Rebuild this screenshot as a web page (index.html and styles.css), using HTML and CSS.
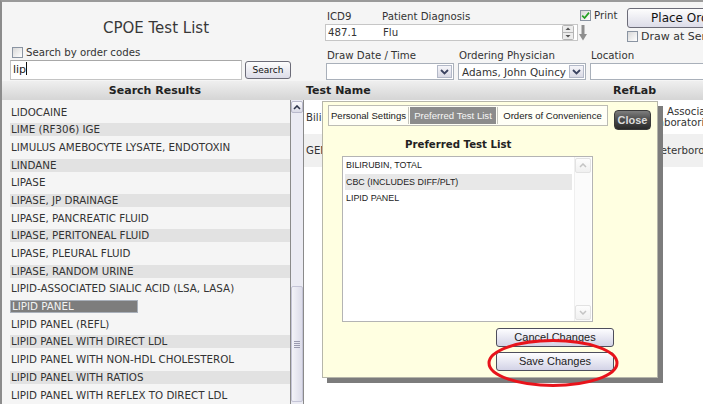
FILE: index.html
```html
<!DOCTYPE html>
<html lang="en">

<head>
    <meta charset="UTF-8">
    <meta name="viewport" content="width=device-width, initial-scale=1.0">
    <title>CPOE Test List</title>
    <link rel="stylesheet" href="styles.css">
</head>

<body>
    <div class="app">
        <!-- top: search + order header -->
        <div class="top">
            <div class="search-panel">
                <div class="title">CPOE Test List</div>
                <div class="code-row"><span class="cb"></span>Search by order codes</div>
                <div class="search-row">
                    <div class="search-box">lip<span class="caret"></span></div>
                    <div class="btn search-btn">Search</div>
                </div>
            </div>

            <div class="order-panel">
                <div class="row-a">
                    <div class="diag">
                        <div class="diag-labels">
                            <span class="lbl-icd">ICD9</span>
                            <span class="lbl-diag">Patient Diagnosis</span>
                            <span class="print"><span class="cb"><svg width="9" height="9" viewBox="0 0 9 9"><path d="M1.2 4.6 L3.6 7 L8 1.6" stroke="#23a023" stroke-width="1.7" fill="none"/></svg></span>Print</span>
                        </div>
                        <div class="diag-field-row">
                            <div class="diag-field">
                                <span class="icd-val">487.1</span>
                                <span class="dx-val">Flu</span>
                                <svg class="spin" width="12" height="15" viewBox="0 0 12 15">
                                    <rect x="0.5" y="0.5" width="11" height="14" rx="1" fill="#ececec" stroke="#b4b4b4"/>
                                    <line x1="1" y1="7.5" x2="11" y2="7.5" stroke="#b4b4b4"/>
                                    <path d="M3.5 5 L6 2.5 L8.5 5 Z" fill="#555"/>
                                    <path d="M3.5 10 L6 12.5 L8.5 10 Z" fill="#555"/>
                                </svg>
                            </div>
                            <svg class="dn-arrow" width="8" height="16" viewBox="0 0 8 16">
                                <rect x="2.5" y="0" width="3" height="10" fill="#8e8e8e"/>
                                <path d="M0 9 L8 9 L4 15.5 Z" fill="#8e8e8e"/>
                            </svg>
                        </div>
                    </div>
                    <div class="place">
                        <div class="btn place-btn">Place Order</div>
                        <div class="draw-row"><span class="cb"></span>Draw at Service Center</div>
                    </div>
                </div>

                <div class="row-b">
                    <div class="fld fld-date">
                        <div class="fld-lbl">Draw Date / Time</div>
                        <div class="sel"><span class="sel-txt"></span><span class="sel-btn"><svg width="9" height="6" viewBox="0 0 9 6"><polyline points="1,1 4.5,4.5 8,1" stroke="#3b4360" stroke-width="1.8" fill="none"/></svg></span></div>
                    </div>
                    <div class="fld fld-doc">
                        <div class="fld-lbl">Ordering Physician</div>
                        <div class="sel"><span class="sel-txt">Adams, John Quincy</span><span class="sel-btn"><svg width="9" height="6" viewBox="0 0 9 6"><polyline points="1,1 4.5,4.5 8,1" stroke="#3b4360" stroke-width="1.8" fill="none"/></svg></span></div>
                    </div>
                    <div class="fld fld-loc">
                        <div class="fld-lbl">Location</div>
                        <div class="sel loc-box"></div>
                    </div>
                </div>
            </div>
        </div>

        <!-- column headings -->
        <div class="headbar">
            <div class="h-results">Search Results</div>
            <div class="h-name">Test Name</div>
            <div class="h-lab">RefLab</div>
        </div>

        <div class="main">
            <div class="results">
                <ul class="result-list">
                    <li>LIDOCAINE</li>
                    <li class="alt">LIME (RF306) IGE</li>
                    <li>LIMULUS AMEBOCYTE LYSATE, ENDOTOXIN</li>
                    <li class="alt">LINDANE</li>
                    <li>LIPASE</li>
                    <li class="alt">LIPASE, JP DRAINAGE</li>
                    <li>LIPASE, PANCREATIC FLUID</li>
                    <li class="alt">LIPASE, PERITONEAL FLUID</li>
                    <li>LIPASE, PLEURAL FLUID</li>
                    <li class="alt">LIPASE, RANDOM URINE</li>
                    <li>LIPID-ASSOCIATED SIALIC ACID (LSA, LASA)</li>
                    <li class="sel">LIPID PANEL</li>
                    <li>LIPID PANEL (REFL)</li>
                    <li class="alt">LIPID PANEL WITH DIRECT LDL</li>
                    <li>LIPID PANEL WITH NON-HDL CHOLESTEROL</li>
                    <li class="alt">LIPID PANEL WITH RATIOS</li>
                    <li>LIPID PANEL WITH REFLEX TO DIRECT LDL</li>
                </ul>
            </div>
            <div class="vscroll">
                <div class="vs-up"><svg width="8" height="5" viewBox="0 0 8 5"><polyline points="1,4 4,1 7,4" stroke="#2c3348" stroke-width="1.6" fill="none"/></svg></div>
                <div class="vs-track"></div>
                <div class="vs-thumb"><span class="grip"></span></div>
            </div>
            <div class="tests">
                <div class="trow">
                    <div class="t-name">Bilirubin, Total</div>
                    <div class="t-lab"><div class="lab-1">Associated</div><div>Laboratories</div></div>
                </div>
                <div class="trow alt">
                    <div class="t-name">GENERAL HEALTH PANEL</div>
                    <div class="t-lab"><div class="lab-2">Peterborough</div></div>
                </div>
            </div>
        </div>

        <!-- preferences popup -->
        <div class="dlg">
            <div class="dlg-top">
                <div class="tabs">
                    <span class="tab tab-1">Personal Settings</span>
                    <span class="tab tab-2 on">Preferred Test List</span>
                    <span class="tab tab-3">Orders of Convenience</span>
                </div>
                <div class="close">Close</div>
            </div>
            <div class="dlg-title">Preferred Test List</div>
            <div class="pick">
                <ul class="pick-list">
                    <li>BILIRUBIN, TOTAL</li>
                    <li class="hl">CBC (INCLUDES DIFF/PLT)</li>
                    <li>LIPID PANEL</li>
                </ul>
                <div class="pick-sb">
                    <span class="pk-btn"><svg width="8" height="5" viewBox="0 0 8 5"><polyline points="1,4 4,1 7,4" stroke="#c4c4c4" stroke-width="1.5" fill="none"/></svg></span>
                    <span class="pk-btn"><svg width="8" height="5" viewBox="0 0 8 5"><polyline points="1,1 4,4 7,1" stroke="#c4c4c4" stroke-width="1.5" fill="none"/></svg></span>
                </div>
            </div>
            <div class="dlg-btns">
                <div class="dbtn">Cancel Changes</div>
                <div class="dbtn">Save Changes</div>
            </div>
        </div>

        <svg class="mark" width="134" height="50" viewBox="0 0 134 50">
            <ellipse cx="67" cy="25" rx="64" ry="22.5" fill="none" stroke="#e8131b" stroke-width="3"/>
        </svg>
    </div>
</body>

</html>
```

FILE: styles.css
```css
html,
body {
    margin: 0;
}

body {
    font-family: "DejaVu Sans", Verdana, sans-serif;
    font-size: 10.2px;
    color: #333;
    background: #fff;
    overflow: hidden;
}

.app {
    position: relative;
    width: 703px;
    height: 404px;
    box-sizing: border-box;
    border-top: 2px solid #9a9a9a;
    border-left: 2px solid #8c8c8c;
    overflow: hidden;
    background: #fff;
}

/* shared bits */
.cb {
    display: inline-flex;
    align-items: center;
    justify-content: center;
    width: 11px;
    height: 11px;
    box-sizing: border-box;
    border: 1px solid #8a94a2;
    background: linear-gradient(135deg, #d8d8d8, #fff);
    flex: none;
}

.btn {
    box-sizing: border-box;
    border: 1px solid #6c6c78;
    border-radius: 3px;
    background: linear-gradient(#fdfdfd, #dcdce8);
    color: #111;
    text-align: center;
}

/* top area */
.top {
    display: flex;
    height: 79px;
    background: #f5f5f5;
}

.search-panel {
    flex: none;
    width: 303px;
    box-sizing: border-box;
    padding: 17px 0 0 8px;
}

.title {
    height: 18px;
    line-height: 18px;
    font-size: 15px;
    color: #383838;
    text-align: center;
    margin-left: -3px;
}

.code-row {
    display: flex;
    align-items: center;
    gap: 3px;
    height: 12px;
    margin-top: 9px;
    padding-left: 2px;
}

.search-row {
    display: flex;
    margin-top: 2px;
    height: 20px;
}

.search-box {
    width: 232px;
    height: 20px;
    box-sizing: border-box;
    border: 1px solid #c4c4c4;
    border-top-color: #a8a8a8;
    background: #fff;
    font-size: 11px;
    line-height: 18px;
    padding-left: 2px;
    color: #222;
}

.caret {
    display: inline-block;
    width: 1px;
    height: 13px;
    background: #111;
    vertical-align: -2px;
}

.search-btn {
    width: 46px;
    height: 18px;
    margin: 1px 0 0 3px;
    font-size: 9px;
    line-height: 16px;
}

.order-panel {
    flex: 1;
    min-width: 0;
    padding-left: 20px;
}

.row-a {
    display: flex;
    height: 40px;
}

.diag {
    flex: none;
    width: 302px;
}

.diag-labels {
    display: flex;
    align-items: center;
    height: 14px;
    margin-top: 7px;
}

.lbl-icd {
    width: 57px;
    padding-left: 2px;
    box-sizing: border-box;
}

.lbl-diag {
    width: 198px;
}

.print {
    align-self: flex-start;
    display: flex;
    align-items: center;
    gap: 3px;
    height: 12px;
}

.diag-field-row {
    display: flex;
    align-items: center;
    margin-top: 1px;
}

.diag-field {
    display: flex;
    align-items: center;
    width: 253px;
    height: 17px;
    box-sizing: border-box;
    border: 1px solid #c6c6c6;
    background: #fff;
}

.icd-val {
    width: 57px;
    padding-left: 2px;
    box-sizing: border-box;
}

.dx-val {
    flex: 1;
}

.spin {
    margin-right: 3px;
}

.dn-arrow {
    margin-left: 1px;
}

.place {
    flex: none;
    padding-top: 6px;
}

.place-btn {
    width: 118px;
    height: 20px;
    font-size: 12px;
    line-height: 18px;
}

.draw-row {
    display: flex;
    align-items: center;
    gap: 3px;
    height: 11px;
    margin-top: 3px;
    font-size: 11px;
    white-space: nowrap;
}

.row-b {
    display: flex;
    gap: 4px;
    height: 39px;
    padding-left: 1px;
}

.fld {
    flex: none;
}

.fld-lbl {
    height: 12px;
    line-height: 12px;
    margin-top: 8px;
    padding-left: 1px;
}

.sel {
    display: flex;
    align-items: center;
    width: 128px;
    height: 17px;
    margin-top: 1px;
    box-sizing: border-box;
    border: 1px solid #a9b0ba;
    background: #fff;
}

.sel-txt {
    flex: 1;
    padding-left: 3px;
    white-space: nowrap;
    overflow: hidden;
    font-size: 10.4px;
}

.sel-btn {
    display: flex;
    align-items: center;
    justify-content: center;
    width: 15px;
    height: 13px;
    margin-right: 1px;
    box-sizing: border-box;
    border: 1px solid #b3b9c8;
    background: linear-gradient(#f6f6fa, #d9d9e4);
}

.loc-box {
    width: 130px;
}

/* column headings */
.headbar {
    display: flex;
    height: 19px;
    line-height: 19px;
    background: linear-gradient(#efefef, #d5d5d5);
    font-size: 11px;
    font-weight: bold;
    color: #222;
}

.h-results {
    flex: none;
    width: 303px;
    padding-left: 3px;
    box-sizing: border-box;
    text-align: center;
}

.h-name {
    flex: none;
    width: 308px;
    padding-left: 1px;
    box-sizing: border-box;
}

/* result list + table */
.main {
    display: flex;
    height: 304px;
}

.results {
    flex: none;
    width: 289px;
    box-sizing: border-box;
    padding: 5.5px 0 0 8px;
    background: #f5f5f5;
    border-right: 1px solid #8a8a8a;
    overflow: hidden;
}

.result-list {
    list-style: none;
    margin: 0;
    padding: 0;
}

.result-list li {
    height: 13px;
    line-height: 13px;
    margin-bottom: 4.7px;
    padding-left: 1px;
    font-size: 10.3px;
    white-space: nowrap;
}

.result-list li.alt {
    background: #e2e2e2;
}

.result-list li.sel {
    background: #7d7d7d;
    color: #f2f2f2;
}

.vscroll {
    flex: none;
    display: flex;
    flex-direction: column;
    width: 13px;
    box-sizing: border-box;
    border-right: 1px solid #8a8a8a;
    background: #ebebf3;
}

.vs-up {
    display: flex;
    align-items: center;
    justify-content: center;
    height: 12px;
    margin-top: 1px;
    box-sizing: border-box;
    border: 1px solid #b9b9cc;
    border-radius: 2px;
    background: linear-gradient(#fafafd, #dadae6);
}

.vs-track {
    height: 173px;
}

.vs-thumb {
    display: flex;
    align-items: center;
    justify-content: center;
    height: 116px;
    box-sizing: border-box;
    border: 1px solid #c4c4d6;
    border-radius: 2px;
    background: linear-gradient(90deg, #f2f2f8, #dcdce9);
}

.grip {
    width: 6px;
    height: 7px;
    background: repeating-linear-gradient(#9a9aae 0 1px, transparent 1px 2px);
}

.tests {
    flex: 1;
    min-width: 0;
    background: #fff;
}

.trow {
    display: flex;
    align-items: center;
    height: 34px;
    white-space: nowrap;
}

.trow.alt {
    height: 33px;
    background: #f0f0f0;
}

.t-name {
    flex: none;
    width: 307px;
    padding-left: 2px;
    box-sizing: border-box;
    overflow: hidden;
}

.t-lab {
    flex: none;
    padding-left: 41px;
    line-height: 11px;
}

.lab-1 {
    padding-left: 15px;
}

.lab-2 {
    padding-left: 3px;
}

/* popup */
.dlg {
    position: absolute;
    left: 320px;
    top: 99px;
    width: 336px;
    height: 277px;
    box-sizing: border-box;
    border: 1px solid #b6b6aa;
    background: #ffffe1;
    box-shadow: 5px 5px 0 #7c7c7c;
    font-family: "Liberation Sans", Arial, sans-serif;
    color: #222;
}

.dlg-top {
    display: flex;
    align-items: flex-start;
    padding-left: 5px;
}

.tabs {
    display: flex;
    margin-top: 3px;
    padding: 1px 0;
    border: 1px solid #bcbcb4;
    background: #fffff6;
    font-size: 9.6px;
    white-space: nowrap;
}

.tab {
    height: 17px;
    line-height: 17px;
    text-align: center;
    color: #222;
}

.tab-1 {
    width: 79px;
    border-right: 1px solid #c4c4bc;
}

.tab-2 {
    width: 86px;
    margin: 0 1px;
}

.tab-3 {
    width: 109px;
    border-left: 1px solid #c4c4bc;
}

.tab.on {
    background: #8c8c8c;
    color: #f6f6f6;
}

.close {
    width: 37px;
    height: 20px;
    margin: 8px 0 0 6px;
    box-sizing: border-box;
    border: 1px solid #3a3a3a;
    border-radius: 4px;
    background: linear-gradient(#7e7e7e, #4a4a4a 50%, #2a2a2a);
    color: #dcdcdc;
    font-size: 11px;
    font-weight: bold;
    line-height: 18px;
    text-align: center;
}

.dlg-title {
    margin: 8px 0 0 82px;
    height: 14px;
    line-height: 14px;
    font-family: "DejaVu Sans", Verdana, sans-serif;
    font-size: 10.2px;
    font-weight: bold;
    color: #222;
}

.pick {
    display: flex;
    width: 251px;
    height: 166px;
    margin: 4px 0 0 19px;
    box-sizing: border-box;
    border: 1px solid #b4b4b4;
    background: #fff;
}

.pick-list {
    list-style: none;
    width: 227px;
    margin: 0 0 0 2px;
    padding: 0;
}

.pick-list li {
    height: 16.5px;
    line-height: 16.5px;
    padding-left: 1px;
    font-size: 8.9px;
}

.pick-list li.hl {
    background: #e8e8e8;
}

.pick-sb {
    display: flex;
    flex-direction: column;
    justify-content: space-between;
    width: 17px;
    margin-left: auto;
    margin-right: 1px;
    padding: 1px 0;
    box-sizing: border-box;
    border-left: 1px solid #efefef;
    background: #fbfbfb;
}

.pk-btn {
    display: flex;
    align-items: center;
    justify-content: center;
    height: 15px;
    box-sizing: border-box;
    border: 1px solid #e2e2e2;
    border-radius: 2px;
    background: linear-gradient(#fdfdfd, #f0f0f0);
}

.dlg-btns {
    display: flex;
    flex-direction: column;
    gap: 5px;
    margin: 6px 0 0 173px;
}

.dbtn {
    width: 118px;
    height: 19px;
    box-sizing: border-box;
    border: 1px solid #4e4e5c;
    border-radius: 3px;
    background: linear-gradient(#fdfdff, #d3d3e6);
    font-size: 11px;
    line-height: 17px;
    text-align: center;
    color: #222;
}

/* red marker drawn over the screenshot */
.mark {
    position: absolute;
    left: 484px;
    top: 336px;
}
```
